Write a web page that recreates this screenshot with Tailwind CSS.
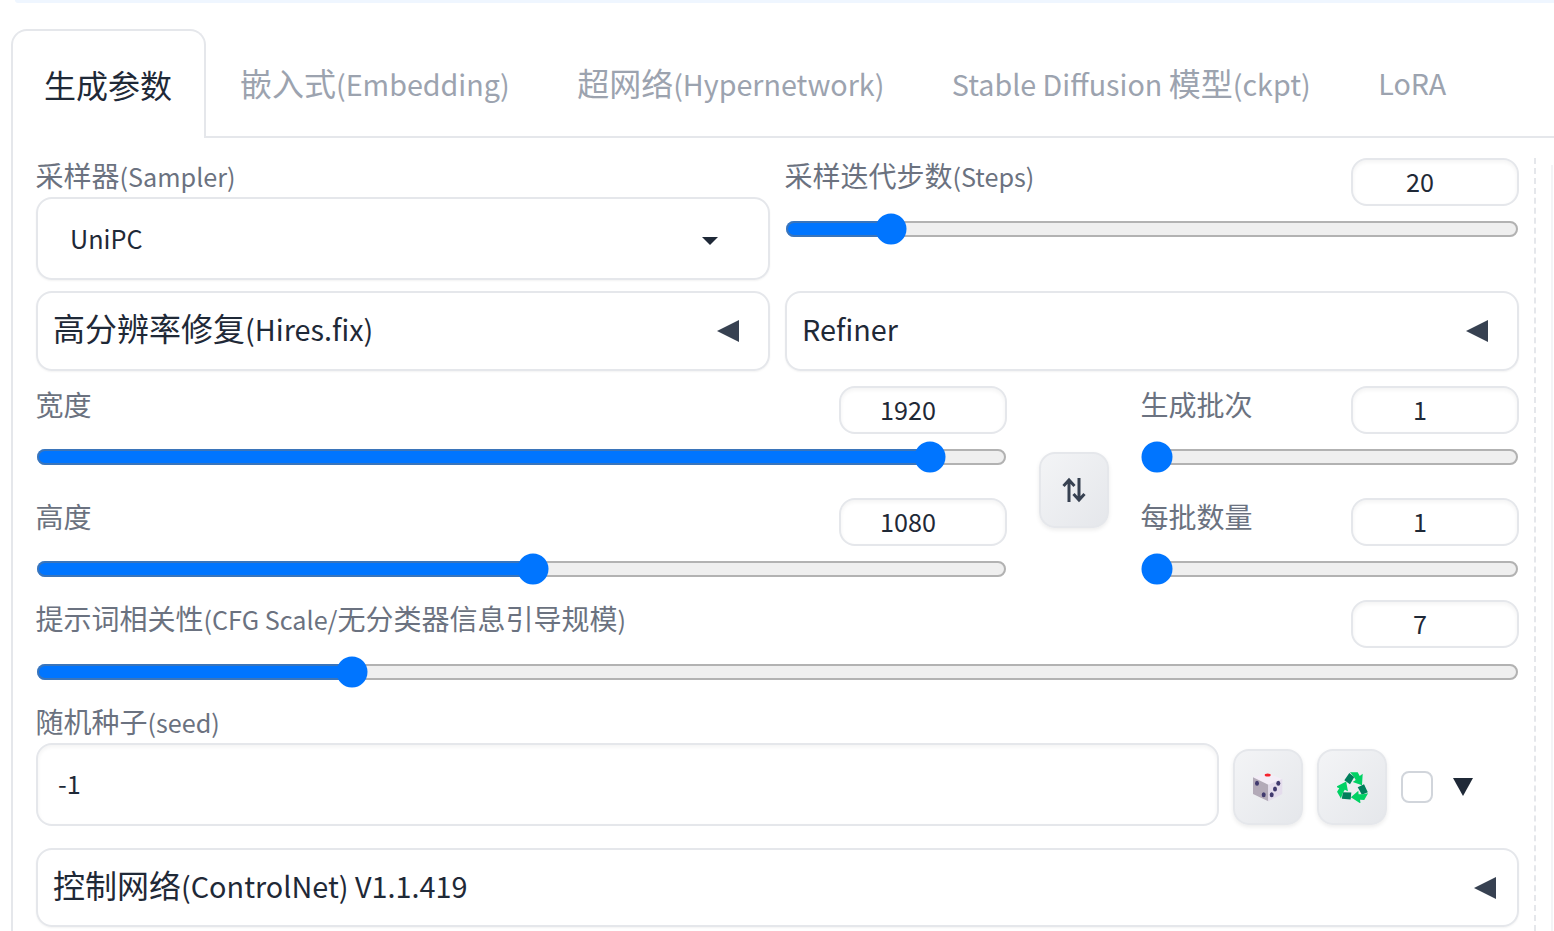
<!DOCTYPE html>
<html lang="en">
<head>
  <meta charset="UTF-8" />
  <title>txt2img</title>
  <script src="https://cdn.jsdelivr.net/npm/@tailwindcss/browser@4"></script>
</head>
<body class="bg-white font-['Noto_Sans_CJK_SC','Liberation_Sans',sans-serif] text-[#1f2937]">
  <div class="h-[931px] w-[1554px] overflow-hidden flex flex-col">
    <div class="h-[3px] shrink-0 ml-[15px] bg-[#eff6ff] rounded-bl-[8px]"></div>

    <!-- tabs -->
    <div class="flex shrink-0 ml-[11px] mt-[26px] h-[109px] border-b-2 border-[#e5e7eb] text-[32px] text-[#9ca3af] whitespace-nowrap">
      <div class="w-[195px] h-[109px] flex items-center justify-center pb-[1px] pr-[1px] border-2 border-b-0 border-[#e5e7eb] rounded-t-[16px] bg-white text-[#1f2937]">生成参数</div>
      <div class="ml-[34px] h-[106px] flex items-center"><span>嵌入式<span class="text-[28.7px]">(Embedding)</span></span></div>
      <div class="ml-[67.5px] h-[106px] flex items-center"><span>超网络<span class="text-[28.7px]">(Hypernetwork)</span></span></div>
      <div class="ml-[67.5px] h-[106px] flex items-center"><span><span class="text-[28.7px]">Stable Diffusion </span>模型<span class="text-[28.7px]">(ckpt)</span></span></div>
      <div class="ml-[67.5px] h-[106px] flex items-center pt-[2px] text-[28.7px]">LoRA</div>
    </div>

    <div class="flex flex-1 ml-[11px] border-l-2 border-[#e5e7eb] pl-[23px]">
      <div class="w-[1483px] shrink-0 pt-[20px]">

        <div class="grid grid-cols-2 gap-x-[15px]">
          <div>
            <div class="h-[39px] -ml-[0.5px] pb-[5px] flex items-center text-[28px] text-[#6b7280]"><span>采样器<span class="text-[25.2px]">(Sampler)</span></span></div>
            <div class="h-[83px] flex items-center justify-between pl-[32px] pr-[50px] border-2 border-[#e5e7eb] rounded-[16px] shadow-[0_1px_2px_rgba(0,0,0,0.05)] text-[25.2px]">
              <span>UniPC</span>
              <svg class="mt-[5px]" width="16" height="8" viewBox="0 0 16 8"><path d="M0 0h16L8 8z" fill="#1f2937"/></svg>
            </div>
          </div>
          <div>
            <div class="flex justify-between">
              <div class="h-[39px] -ml-[0.5px] pb-[5px] flex items-center text-[28px] text-[#6b7280]"><span>采样迭代步数<span class="text-[25.2px]">(Steps)</span></span></div>
              <div class="w-[168px] h-[48px] flex items-center justify-center pr-[30px] border-2 border-[#e5e7eb] rounded-[16px] shadow-[inset_0_2px_4px_rgba(0,0,0,0.05)] text-[25.2px]">20</div>
            </div>
            <input type="range" min="1" max="150" value="20" class="block w-full h-[16px] m-0 mt-[3.5px] accent-[#0075ff] [zoom:2]" />
          </div>
        </div>

        <div class="grid grid-cols-2 gap-x-[15px] mt-[11px]">
          <div class="h-[80px] flex items-center justify-between pl-[15px] pr-[29px] border-2 border-[#e5e7eb] rounded-[16px] shadow-[0_1px_2px_rgba(0,0,0,0.05)] text-[32px]">
            <span class="pb-[8px]">高分辨率修复<span class="text-[28.8px]">(Hires.fix)</span></span>
            <svg width="22" height="22" viewBox="0 0 22 22"><path d="M22 0v22L0 11z" fill="#374151"/></svg>
          </div>
          <div class="h-[80px] flex items-center justify-between pl-[15px] pr-[29px] border-2 border-[#e5e7eb] rounded-[16px] shadow-[0_1px_2px_rgba(0,0,0,0.05)] text-[28.8px]">
            <span class="pb-[4px]">Refiner</span>
            <svg width="22" height="22" viewBox="0 0 22 22"><path d="M22 0v22L0 11z" fill="#374151"/></svg>
          </div>
        </div>

        <div class="flex mt-[15px]">
          <div class="w-[971px] shrink-0">
            <div class="flex justify-between">
              <div class="h-[39px] -ml-[0.5px] pb-[4px] flex items-center text-[28px] text-[#6b7280]">宽度</div>
              <div class="w-[168px] h-[48px] flex items-center justify-center pr-[30px] border-2 border-[#e5e7eb] rounded-[16px] shadow-[inset_0_2px_4px_rgba(0,0,0,0.05)] text-[25.2px]">1920</div>
            </div>
            <input type="range" min="64" max="2048" value="1920" step="8" class="block w-full h-[16px] m-0 mt-[3.5px] accent-[#0075ff] [zoom:2]" />
            <div class="flex justify-between mt-[25px]">
              <div class="h-[39px] -ml-[0.5px] pb-[4px] flex items-center text-[28px] text-[#6b7280]">高度</div>
              <div class="w-[168px] h-[48px] flex items-center justify-center pr-[30px] border-2 border-[#e5e7eb] rounded-[16px] shadow-[inset_0_2px_4px_rgba(0,0,0,0.05)] text-[25.2px]">1080</div>
            </div>
            <input type="range" min="64" max="2048" value="1080" step="8" class="block w-full h-[16px] m-0 mt-[3.5px] accent-[#0075ff] [zoom:2]" />
          </div>

          <button class="w-[70px] h-[76px] ml-[32px] mt-[66px] shrink-0 flex items-center justify-center border-2 border-[#e5e7eb] rounded-[16px] bg-gradient-to-br from-[#f3f4f6] to-[#e5e7eb] shadow-[0_2px_4px_rgba(0,0,0,0.08)]">
            <svg width="24" height="26" viewBox="0 0 24 26" fill="none" stroke="#374151" stroke-width="3"><path d="M7 25V3M1.500 9 7 3l5.500 6"/><path d="M17 1v22M11.500 17l5.500 6 5.500-6"/></svg>
          </button>

          <div class="w-[378px] ml-[32px] shrink-0">
            <div class="flex justify-between">
              <div class="h-[39px] -ml-[0.5px] pb-[4px] flex items-center text-[28px] text-[#6b7280]">生成批次</div>
              <div class="w-[168px] h-[48px] flex items-center justify-center pr-[30px] border-2 border-[#e5e7eb] rounded-[16px] shadow-[inset_0_2px_4px_rgba(0,0,0,0.05)] text-[25.2px]">1</div>
            </div>
            <input type="range" min="1" max="100" value="1" class="block w-full h-[16px] m-0 mt-[3.5px] accent-[#0075ff] [zoom:2]" />
            <div class="flex justify-between mt-[25px]">
              <div class="h-[39px] -ml-[0.5px] pb-[4px] flex items-center text-[28px] text-[#6b7280]">每批数量</div>
              <div class="w-[168px] h-[48px] flex items-center justify-center pr-[30px] border-2 border-[#e5e7eb] rounded-[16px] shadow-[inset_0_2px_4px_rgba(0,0,0,0.05)] text-[25.2px]">1</div>
            </div>
            <input type="range" min="1" max="8" value="1" class="block w-full h-[16px] m-0 mt-[3.5px] accent-[#0075ff] [zoom:2]" />
          </div>
        </div>

        <div class="mt-[15px]">
          <div class="flex justify-between">
            <div class="h-[39px] -ml-[0.5px] pb-[4px] flex items-center text-[28px] text-[#6b7280]"><span>提示词相关性<span class="text-[25.2px]">(CFG Scale/</span>无分类器信息引导规模<span class="text-[25.2px]">)</span></span></div>
            <div class="w-[168px] h-[48px] flex items-center justify-center pr-[30px] border-2 border-[#e5e7eb] rounded-[16px] shadow-[inset_0_2px_4px_rgba(0,0,0,0.05)] text-[25.2px]">7</div>
          </div>
          <input type="range" min="1" max="30" value="7" class="block w-full h-[16px] m-0 mt-[4px] accent-[#0075ff] [zoom:2]" />
        </div>

        <div class="mt-[16px]">
          <div class="h-[39px] -ml-[0.5px] pb-[6px] flex items-center text-[28px] text-[#6b7280]"><span>随机种子<span class="text-[25.2px]">(seed)</span></span></div>
          <div class="flex items-start">
            <div class="w-[1183px] h-[83px] flex items-center pl-[20px] pb-[2px] border-2 border-[#e5e7eb] rounded-[16px] shadow-[inset_0_2px_4px_rgba(0,0,0,0.05)] text-[25.2px]">-1</div>
            <button class="w-[70px] h-[76px] ml-[14px] mt-[6px] flex items-center justify-center border-2 border-[#e5e7eb] rounded-[16px] bg-gradient-to-br from-[#f3f4f6] to-[#e5e7eb] shadow-[0_2px_4px_rgba(0,0,0,0.08)]">
              <svg width="32" height="32" viewBox="0 0 32 32">
                <path d="M15.700 2.300 30.300 8 16.300 13.700 1 6.300z" fill="#f3edf7"/>
                <path d="M1 6.300 16.300 13.700V30.300L1 23z" fill="#b3aab8"/>
                <path d="M30.300 8V23L16.300 30.300V13.700z" fill="#e4dcec"/>
                <ellipse cx="15.700" cy="4" rx="3" ry="1.500" fill="#f5222d"/>
                <g fill="#413a6e">
                  <ellipse cx="5" cy="12.300" rx="2" ry="2.500"/>
                  <ellipse cx="11.700" cy="23.700" rx="2" ry="2.500"/>
                  <ellipse cx="26.300" cy="12.300" rx="2" ry="2.500"/>
                  <ellipse cx="23" cy="18" rx="2" ry="2.500"/>
                  <ellipse cx="19.700" cy="23.700" rx="2" ry="2.500"/>
                </g>
              </svg>
            </button>
            <button class="w-[70px] h-[76px] ml-[14px] mt-[6px] flex items-center justify-center border-2 border-[#e5e7eb] rounded-[16px] bg-gradient-to-br from-[#f3f4f6] to-[#e5e7eb] shadow-[0_2px_4px_rgba(0,0,0,0.08)]">
              <svg class="ml-[1px]" width="32" height="32" viewBox="0 0 32 32">
                <defs>
                  <g id="recycleArm">
                    <path d="M7.300 9.300 12.300 2 17.300 6 13 13.300z" fill="#007f5c"/>
                    <path d="M13 1.300H20.700L22.700 5 25.700 2.700 25 14.300 15.700 11 18.700 9 16.500 5.300z" fill="#00d264"/>
                  </g>
                </defs>
                <use href="#recycleArm"/>
                <use href="#recycleArm" transform="rotate(120 16 17)"/>
                <use href="#recycleArm" transform="rotate(240 16 17)"/>
              </svg>
            </button>
            <div class="w-[32px] h-[32px] ml-[14px] mt-[28px] border-2 border-[#d1d5db] rounded-[8px] bg-white"></div>
            <svg class="ml-[20px] mt-[35px]" width="20" height="18" viewBox="0 0 20 18"><path d="M0 0h20L10 18z" fill="#1f2937"/></svg>
          </div>
        </div>

        <div class="h-[79px] mt-[22px] flex items-center justify-between pl-[15px] pr-[21px] border-2 border-[#e5e7eb] rounded-[16px] shadow-[0_1px_2px_rgba(0,0,0,0.05)] text-[32px]">
          <span class="pb-[7px]">控制网络<span class="text-[28.8px]">(ControlNet) V1.1.419</span></span>
          <svg width="22" height="22" viewBox="0 0 22 22"><path d="M22 0v22L0 11z" fill="#374151"/></svg>
        </div>
      </div>

      <div class="ml-[15px] mt-[20px] border-l-2 border-dashed border-[#e5e7eb]"></div>
      <div class="ml-[15px] mt-[27px] border-l-2 border-[#f3f4f6]"></div>
    </div>
  </div>
</body>
</html>
